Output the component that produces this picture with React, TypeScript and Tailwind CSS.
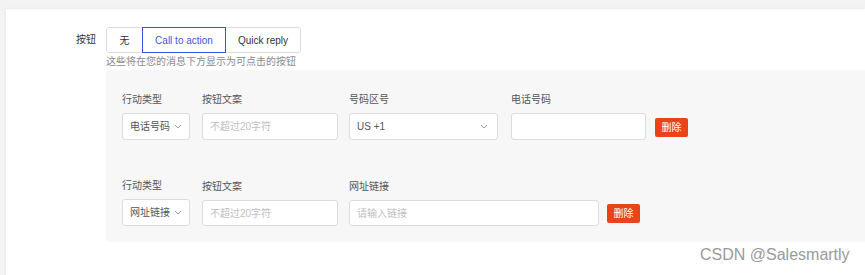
import React from "react";

const Chevron = () => (
  <svg width="8" height="5" viewBox="0 0 8 5" fill="none" className="shrink-0">
    <path d="M1 1l3 3 3-3" stroke="#9a9a9a" strokeWidth="1" />
  </svg>
);

const Label = ({ children }: { children: React.ReactNode }) => (
  <div className="h-[14px] leading-[14px] text-[10px] text-[#555] mb-[6px]">{children}</div>
);

const SelectBox = ({ text, w, chevronPad }: { text: string; w: string; chevronPad?: string }) => (
  <div className={`${w} h-[27px] bg-white border border-[#dcdcdc] rounded-[3px] flex items-center justify-between pl-[7px] ${chevronPad ?? "pr-[5px]"}`}>
    <span className="text-[10px] text-[#555]">{text}</span>
    <Chevron />
  </div>
);

const InputBox = ({ placeholder, w, h = "h-[27px]" }: { placeholder?: string; w: string; h?: string }) => (
  <div className={`${w} ${h} bg-white border border-[#dcdcdc] rounded-[3px] flex items-center pl-[7px]`}>
    <span className="text-[10px] text-[#c0c0c0]">{placeholder}</span>
  </div>
);

const DeleteBtn = () => (
  <div className="w-[33px] h-[19px] bg-[#ec4219] rounded-[2px] flex items-center justify-center text-[10px] text-white mb-[3px]">
    删除
  </div>
);

export default function App() {
  return (
    <div className="relative w-[865px] h-[275px] overflow-hidden bg-[#f3f3f3] pt-[9px] pl-[6px] font-[Liberation_Sans,Noto_Sans_CJK_SC,sans-serif]">
      <div className="bg-white h-[300px] shadow-[0_0_3px_rgba(0,0,0,0.06)] pt-[18px] flex">
        <div className="w-[100px] shrink-0 pr-[10px] flex justify-end">
          <div className="h-[26px] leading-[26px] text-[10px] text-[#333]">按钮</div>
        </div>
        <div className="flex-1 flex flex-col">
          <div className="flex h-[26px]">
            <div className="w-[37px] h-full border border-[#dcdcdc] rounded-l-[3px] flex items-center justify-center text-[10px] text-[#333]">
              无
            </div>
            <div className="relative z-10 -ml-px w-[84px] h-full border border-[#3b50e6] flex items-center justify-center text-[10px] text-[#4254e0]">
              Call to action
            </div>
            <div className="-ml-px w-[76px] h-full border border-[#dcdcdc] rounded-r-[3px] flex items-center justify-center text-[10px] text-[#333]">
              Quick reply
            </div>
          </div>
          <div className="h-[15px] leading-[15px] mt-[1px] text-[10px] text-[#8a8a8a]">这些将在您的消息下方显示为可点击的按钮</div>
          <div className="mt-[1px] bg-[#f7f7f7] rounded-bl-[4px] pl-[16px] pt-[23px] pb-[16px] flex flex-col gap-[39px]">
            <div className="flex items-end">
              <div className="w-[68px] mr-[12px]">
                <Label>行动类型</Label>
                <SelectBox text="电话号码" w="w-[68px]" chevronPad="pr-[7px]" />
              </div>
              <div className="w-[136px] mr-[11px]">
                <Label>按钮文案</Label>
                <InputBox placeholder="不超过20字符" w="w-[136px]" />
              </div>
              <div className="w-[149px] mr-[13px]">
                <Label>号码区号</Label>
                <SelectBox text="US +1" w="w-[149px]" chevronPad="pr-[9px]" />
              </div>
              <div className="w-[135px] mr-[9px]">
                <Label>电话号码</Label>
                <InputBox w="w-[135px]" />
              </div>
              <DeleteBtn />
            </div>
            <div className="flex items-end">
              <div className="w-[68px] mr-[12px]">
                <Label>行动类型</Label>
                <SelectBox text="网址链接" w="w-[68px]" chevronPad="pr-[7px]" />
              </div>
              <div className="w-[136px] mr-[11px]">
                <Label>按钮文案</Label>
                <InputBox placeholder="不超过20字符" w="w-[136px]" h="h-[26px]" />
              </div>
              <div className="w-[250px] mr-[8px]">
                <Label>网址链接</Label>
                <InputBox placeholder="请输入链接" w="w-[250px]" h="h-[26px]" />
              </div>
              <DeleteBtn />
            </div>
          </div>
        </div>
      </div>
      <div className="absolute left-[700px] top-[244px] text-[16px] leading-[22px] text-[#9a9a9a] font-[Liberation_Sans,sans-serif]">
        CSDN @Salesmartly
      </div>
    </div>
  );
}
